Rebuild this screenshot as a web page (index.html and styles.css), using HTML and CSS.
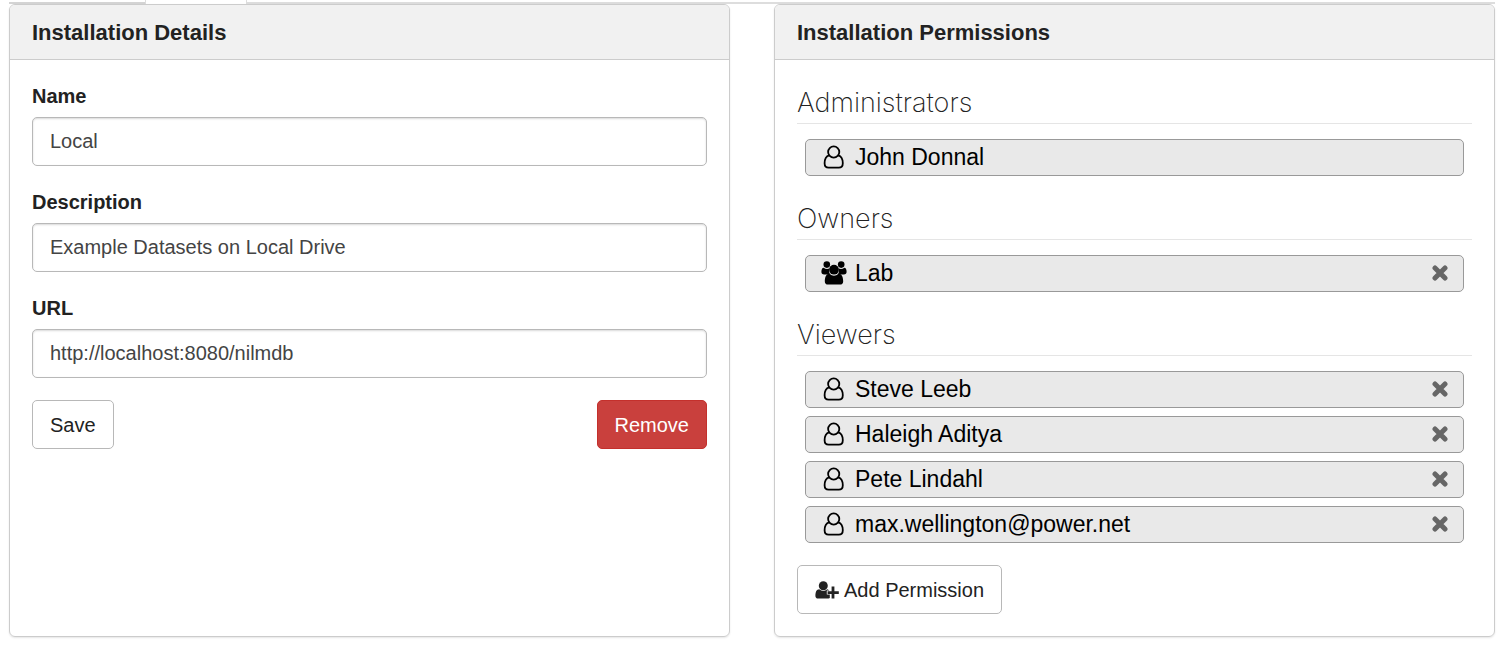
FILE: index.html
```
<!DOCTYPE html>
<html lang="en">
<head>
    <meta charset="UTF-8">
    <meta name="viewport" content="width=device-width, initial-scale=1.0">
    <title>Installation</title>
    <link rel="stylesheet" href="styles.css">
</head>
<body>
    <!-- shared icons -->
    <svg class="sprite" aria-hidden="true">
        <symbol id="icon-user" viewBox="0 0 26 24">
            <g fill="none" stroke="currentColor" stroke-width="1.8">
                <circle cx="12.7" cy="7" r="5.6"/>
                <path d="M8.2 10.3C5 11.2 3.6 14 3.6 18.2C3.6 21 5.2 22.7 7.6 22.7H17.8C20.2 22.7 21.8 21 21.8 18.2C21.8 14 20.4 11.2 17.2 10.3"/>
            </g>
        </symbol>
        <symbol id="icon-group" viewBox="0 0 26 24">
            <g fill="currentColor">
                <circle cx="5.8" cy="3.6" r="3.3"/>
                <circle cx="20.2" cy="3.6" r="3.3"/>
                <path d="M2.6 6.7Q5.8 9 8.6 7.2Q7.2 10.8 9.2 13.4H3.2Q.4 13.4 .4 10.8Q.4 7 2.6 6.700Z"/>
                <path d="M23.4 6.7Q20.2 9 17.4 7.2Q18.8 10.8 16.8 13.4H22.8Q25.6 13.4 25.6 10.8Q25.6 7 23.4 6.700Z"/>
                <circle cx="13" cy="8.7" r="4.9"/>
                <path d="M8.4 12.7Q13 16.7 17.6 12.7C20.8 12.7 22.2 16.2 22.2 20.2Q22.2 23.6 18.8 23.6H7.2Q3.8 23.6 3.8 20.2C3.8 16.2 5.2 12.7 8.4 12.7Z"/>
            </g>
        </symbol>
        <symbol id="icon-times" viewBox="0 0 16 16">
            <path d="M3 3L13 13M13 3L3 13" fill="none" stroke="currentColor" stroke-width="5" stroke-linecap="round"/>
        </symbol>
        <symbol id="icon-user-plus" viewBox="0 0 24 18">
            <g fill="currentColor">
                <circle cx="8.3" cy="4.7" r="4.5"/>
                <path d="M4.2 8.2Q8.3 11.7 12.4 8.2L14.5 9.6H11.8V13.6H14.8V17.1Q14.4 17.5 13.5 17.5H3.1Q.4 17.5 .4 14.7C.4 11 1.6 8.2 4.2 8.2Z"/>
                <path d="M16.6 5.5H19.400V10.200H23.800V12.900H19.400V17.400H16.600V12.900H12.600V10.200H16.600Z"/>
            </g>
        </symbol>
    </svg>

    <div class="nav-tabs">
        <div class="tab-first"></div>
        <div class="tab-active"></div>
        <div class="tab-rest"></div>
    </div>

    <main class="panels">
        <section class="panel">
            <h2 class="panel-heading">Installation Details</h2>
            <form class="panel-body">
                <div class="form-group">
                    <label for="name">Name</label>
                    <input type="text" id="name" value="Local">
                </div>
                <div class="form-group">
                    <label for="description">Description</label>
                    <input type="text" id="description" value="Example Datasets on Local Drive">
                </div>
                <div class="form-group">
                    <label for="url">URL</label>
                    <input type="text" id="url" value="http://localhost:8080/nilmdb">
                </div>
                <div class="form-actions">
                    <button type="button" class="btn">Save</button>
                    <button type="button" class="btn btn-danger">Remove</button>
                </div>
            </form>
        </section>

        <section class="panel">
            <h2 class="panel-heading">Installation Permissions</h2>
            <div class="panel-body">
                <h3 class="role">Administrators</h3>
                <ul class="members">
                    <li class="member">
                        <svg class="member-icon"><use href="#icon-user"/></svg>
                        <span class="member-name">John Donnal</span>
                    </li>
                </ul>

                <h3 class="role">Owners</h3>
                <ul class="members">
                    <li class="member">
                        <svg class="member-icon"><use href="#icon-group"/></svg>
                        <span class="member-name">Lab</span>
                        <button type="button" class="member-remove" aria-label="Remove Lab"><svg><use href="#icon-times"/></svg></button>
                    </li>
                </ul>

                <h3 class="role">Viewers</h3>
                <ul class="members">
                    <li class="member">
                        <svg class="member-icon"><use href="#icon-user"/></svg>
                        <span class="member-name">Steve Leeb</span>
                        <button type="button" class="member-remove" aria-label="Remove Steve Leeb"><svg><use href="#icon-times"/></svg></button>
                    </li>
                    <li class="member">
                        <svg class="member-icon"><use href="#icon-user"/></svg>
                        <span class="member-name">Haleigh Aditya</span>
                        <button type="button" class="member-remove" aria-label="Remove Haleigh Aditya"><svg><use href="#icon-times"/></svg></button>
                    </li>
                    <li class="member">
                        <svg class="member-icon"><use href="#icon-user"/></svg>
                        <span class="member-name">Pete Lindahl</span>
                        <button type="button" class="member-remove" aria-label="Remove Pete Lindahl"><svg><use href="#icon-times"/></svg></button>
                    </li>
                    <li class="member">
                        <svg class="member-icon"><use href="#icon-user"/></svg>
                        <span class="member-name">max.wellington@power.net</span>
                        <button type="button" class="member-remove" aria-label="Remove max.wellington@power.net"><svg><use href="#icon-times"/></svg></button>
                    </li>
                </ul>

                <button type="button" class="btn btn-add"><svg class="btn-icon"><use href="#icon-user-plus"/></svg>Add Permission</button>
            </div>
        </section>
    </main>
</body>
</html>
```

FILE: styles.css
```
* {
    margin: 0;
    padding: 0;
    box-sizing: border-box;
}

body {
    background: #fff;
    color: #222;
    font-family: "Liberation Sans", Arial, sans-serif;
    font-size: 20px;
    line-height: 28px;
    padding: 0 5px 8px 9px;
}

.sprite {
    display: none;
}

/* bottom edge of the tab bar */
.nav-tabs {
    display: flex;
    height: 4px;
}

.tab-first {
    width: 136px;
    border-bottom: 2px solid #d4d4d4;
}

.tab-active {
    width: 102px;
    border-left: 1px solid #ddd;
    border-right: 1px solid #ddd;
}

.tab-rest {
    flex: 1;
    border-bottom: 2px solid #ddd;
}

/* panels */
.panels {
    display: grid;
    grid-template-columns: 1fr 1fr;
    gap: 44px;
}

.panel {
    border: 1px solid #ccc;
    border-radius: 6px;
    box-shadow: 0 1px 2px rgba(0, 0, 0, 0.1);
}

.panel-heading {
    background: #f1f1f1;
    border-bottom: 1px solid #ccc;
    border-radius: 5px 5px 0 0;
    padding: 14px 22px 12px;
    font-size: 22px;
    line-height: 28px;
}

.panel-body {
    padding: 22px;
}

/* form */
.form-group {
    margin-bottom: 22px;
}

.form-group label {
    display: block;
    font-weight: bold;
    margin-bottom: 7px;
}

.form-group input {
    display: block;
    width: 100%;
    height: 49px;
    padding: 0 17px;
    border: 1px solid #b8b8b8;
    border-radius: 5px;
    box-shadow: inset 0 1px 2px rgba(0, 0, 0, 0.15);
    background: #fff;
    color: #444;
    font: inherit;
}

.form-actions {
    display: flex;
    justify-content: space-between;
}

.btn {
    height: 49px;
    padding: 0 17px;
    border: 1px solid #b8b8b8;
    border-radius: 5px;
    background: #fff;
    color: #222;
    font: inherit;
}

.btn-danger {
    background: #c9403d;
    border-color: #c4302c;
    color: #fff;
}

.btn-add {
    display: flex;
    align-items: center;
    gap: 5px;
}

.btn-icon {
    width: 24px;
    height: 18px;
}

/* permissions */
.role {
    height: 42px;
    margin-bottom: 15px;
    border-bottom: 1px solid #e5e5e5;
    font-family: Inter, "Liberation Sans", sans-serif;
    font-size: 27px;
    font-weight: 200;
    line-height: 42px;
}

.members {
    list-style: none;
    display: grid;
    gap: 8px;
    margin: 0 8px 22px;
}

.member {
    display: flex;
    align-items: center;
    gap: 8px;
    height: 37px;
    padding: 0 15px 2px;
    border: 1px solid #999;
    border-radius: 5px;
    background: #e9e9e9;
    color: #000;
    font-size: 23px;
}

.member-icon {
    width: 26px;
    height: 24px;
}

.member-name {
    flex: 1;
}

.member-remove {
    display: flex;
    border: none;
    background: none;
    color: #666;
}

.member-remove svg {
    width: 16px;
    height: 16px;
}
```
